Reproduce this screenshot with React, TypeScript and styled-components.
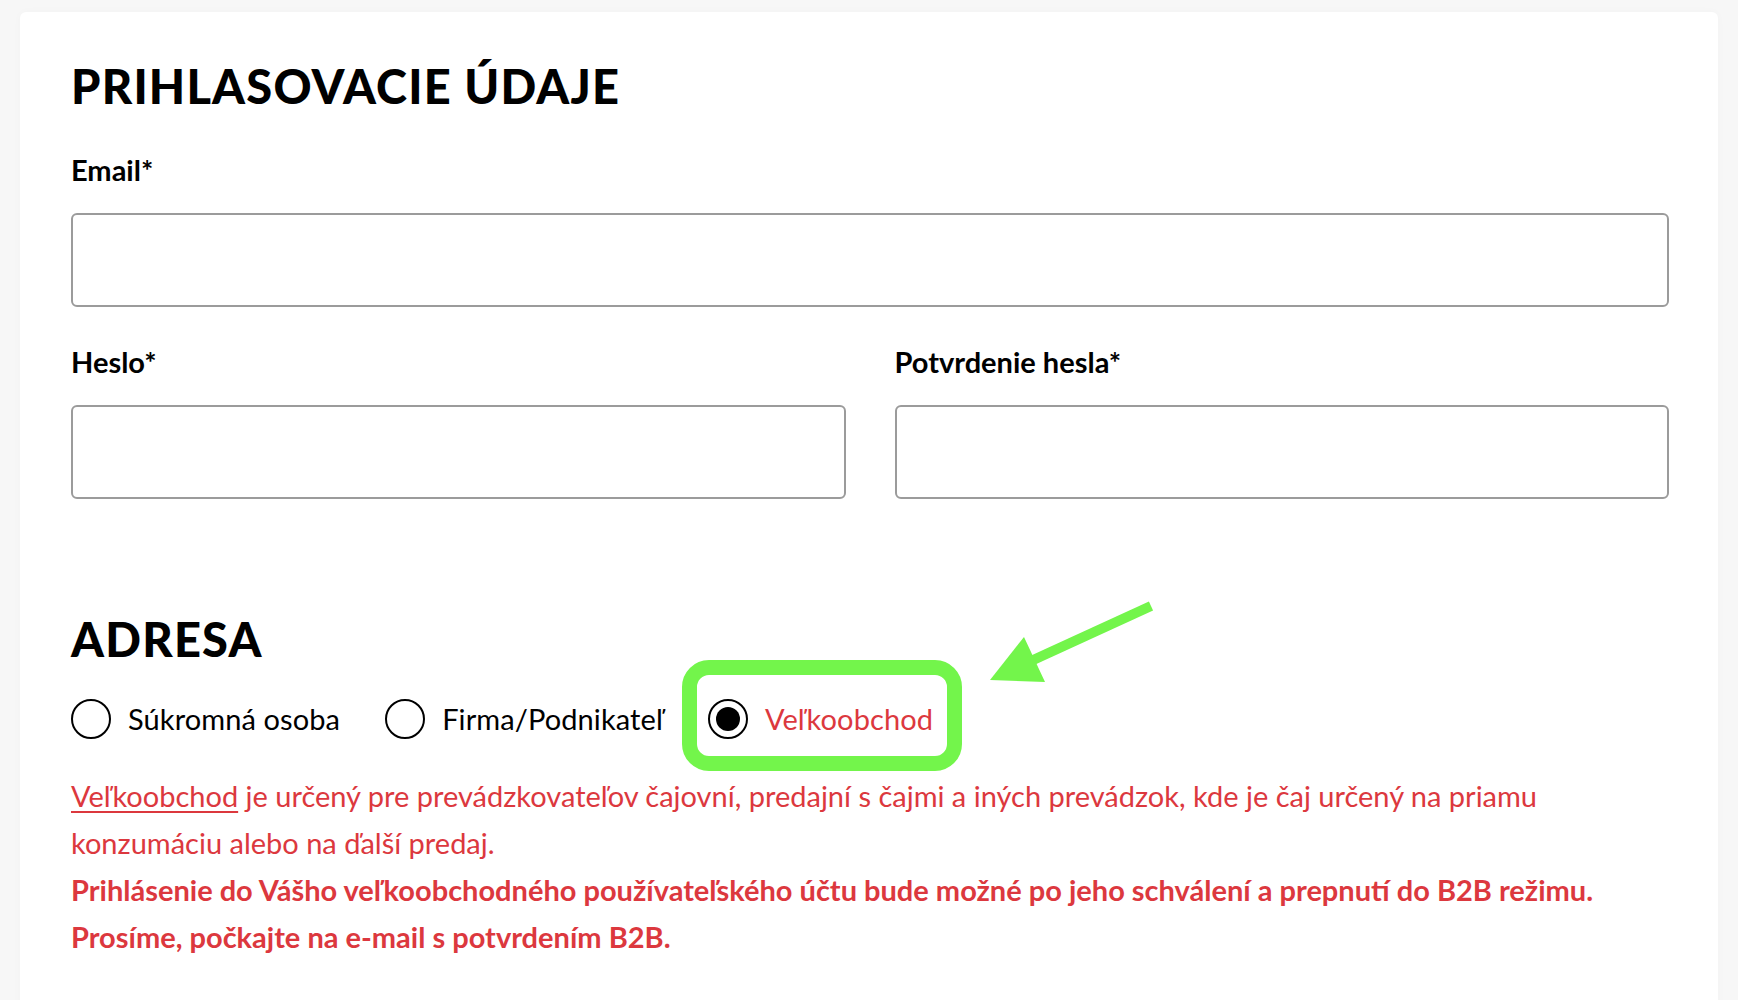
import React, { useState } from 'react'
import styled, { createGlobalStyle } from 'styled-components'

const GlobalStyle = createGlobalStyle`
  html, body {
    margin: 0;
    padding: 0;
    background: #f7f7f7;
  }
  body {
    font-family: Lato, "Open Sans", "DejaVu Sans", sans-serif;
    color: #000;
  }
  * { box-sizing: border-box; }
`

const Page = styled.div`
  padding: 12px 20px 0 20px;
  min-height: 100vh;
`

const Card = styled.div`
  background: #fff;
  border-radius: 6px 6px 0 0;
  box-shadow: 0 0 10px rgba(0, 0, 0, 0.025);
  padding: 46px 49px 60px 51px;
  min-height: calc(100vh - 12px);
`

const SectionTitle = styled.h2<{ $top?: number }>`
  margin: ${p => p.$top ?? 0}px 0 0 0;
  font-size: 47px;
  line-height: 56px;
  font-weight: 900;
  letter-spacing: 1.2px;
`

const Field = styled.div`
  display: flex;
  flex-direction: column;
`

const Label = styled.label`
  font-size: 29px;
  line-height: 36px;
  font-weight: 700;
  margin-bottom: 25px;
`

const TextInput = styled.input`
  height: 94px;
  width: 100%;
  border: 2px solid #9b9b9b;
  border-radius: 6px;
  background: #fff;
  font: inherit;
  font-size: 24px;
  padding: 0 20px;
  outline: none;
`

const Stack = styled.div<{ $top: number }>`
  margin-top: ${p => p.$top}px;
`

const TwoCols = styled.div`
  display: grid;
  grid-template-columns: 1fr 1fr;
  column-gap: 49px;
  margin-top: 37px;
`

const RadioGroup = styled.div`
  display: flex;
  align-items: center;
  gap: 45px;
  margin-top: 32px;
  height: 40px;
`

const RadioItem = styled.label`
  position: relative;
  display: flex;
  align-items: center;
  gap: 17px;
  cursor: pointer;
`

const RadioMark = styled.span<{ $checked: boolean }>`
  width: 40px;
  height: 40px;
  border-radius: 50%;
  border: 2px solid #000;
  display: flex;
  align-items: center;
  justify-content: center;
  flex-shrink: 0;
  &::after {
    content: '';
    width: 24px;
    height: 24px;
    border-radius: 50%;
    background: #000;
    display: ${p => (p.$checked ? 'block' : 'none')};
  }
`

const RadioText = styled.span<{ $checked: boolean }>`
  font-size: 29px;
  line-height: 40px;
  letter-spacing: 0.1px;
  color: ${p => (p.$checked ? '#dc383e' : '#000')};
`

const Highlight = styled.span`
  position: absolute;
  left: -26px;
  right: -29px;
  top: -39px;
  bottom: -32px;
  border: 15px solid #73f54b;
  border-radius: 27px;
  pointer-events: none;
`

const Arrow = styled.svg`
  position: absolute;
  left: 279px;
  top: -96px;
  overflow: visible;
  pointer-events: none;
`

const Note = styled.div`
  margin-top: 33px;
  color: #dc383e;
  font-size: 29px;
  line-height: 47px;
`

const NoteLink = styled.a`
  color: inherit;
  text-decoration: underline;
  text-decoration-thickness: 2px;
  text-underline-offset: 4px;
`

const NoteStrong = styled.p`
  margin: 0;
  font-weight: 700;
`

const options = ['Súkromná osoba', 'Firma/Podnikateľ', 'Veľkoobchod']

export default function App() {
  const [type, setType] = useState(2)

  return (
    <>
      <GlobalStyle />
      <Page>
        <Card>
          <SectionTitle>PRIHLASOVACIE ÚDAJE</SectionTitle>

          <Stack $top={38}>
            <Field>
              <Label>Email*</Label>
              <TextInput type="email" />
            </Field>
          </Stack>

          <TwoCols>
            <Field>
              <Label>Heslo*</Label>
              <TextInput type="password" />
            </Field>
            <Field>
              <Label>Potvrdenie hesla*</Label>
              <TextInput type="password" />
            </Field>
          </TwoCols>

          <SectionTitle $top={112}>ADRESA</SectionTitle>

          <RadioGroup>
            {options.map((o, i) => (
              <RadioItem key={o} onClick={() => setType(i)}>
                <RadioMark $checked={type === i} />
                <RadioText $checked={type === i}>{o}</RadioText>
                {i === 2 && (
                  <>
                    <Highlight />
                    <Arrow width="165" height="82" viewBox="0 0 165 82">
                      <line x1="164" y1="3" x2="44" y2="58" stroke="#73f54b" strokeWidth="10" />
                      <polygon points="3,77 37,34 58,79" fill="#73f54b" />
                    </Arrow>
                  </>
                )}
              </RadioItem>
            ))}
          </RadioGroup>

          <Note>
            <NoteLink href="#">Veľkoobchod</NoteLink> je určený pre prevádzkovateľov čajovní, predajní s čajmi a iných
            prevádzok, kde je čaj určený na priamu konzumáciu alebo na ďalší predaj.
            <NoteStrong>
              Prihlásenie do Vášho veľkoobchodného používateľského účtu bude možné po jeho schválení a prepnutí do B2B
              režimu.
              <br />
              Prosíme, počkajte na e-mail s potvrdením B2B.
            </NoteStrong>
          </Note>
        </Card>
      </Page>
    </>
  )
}
